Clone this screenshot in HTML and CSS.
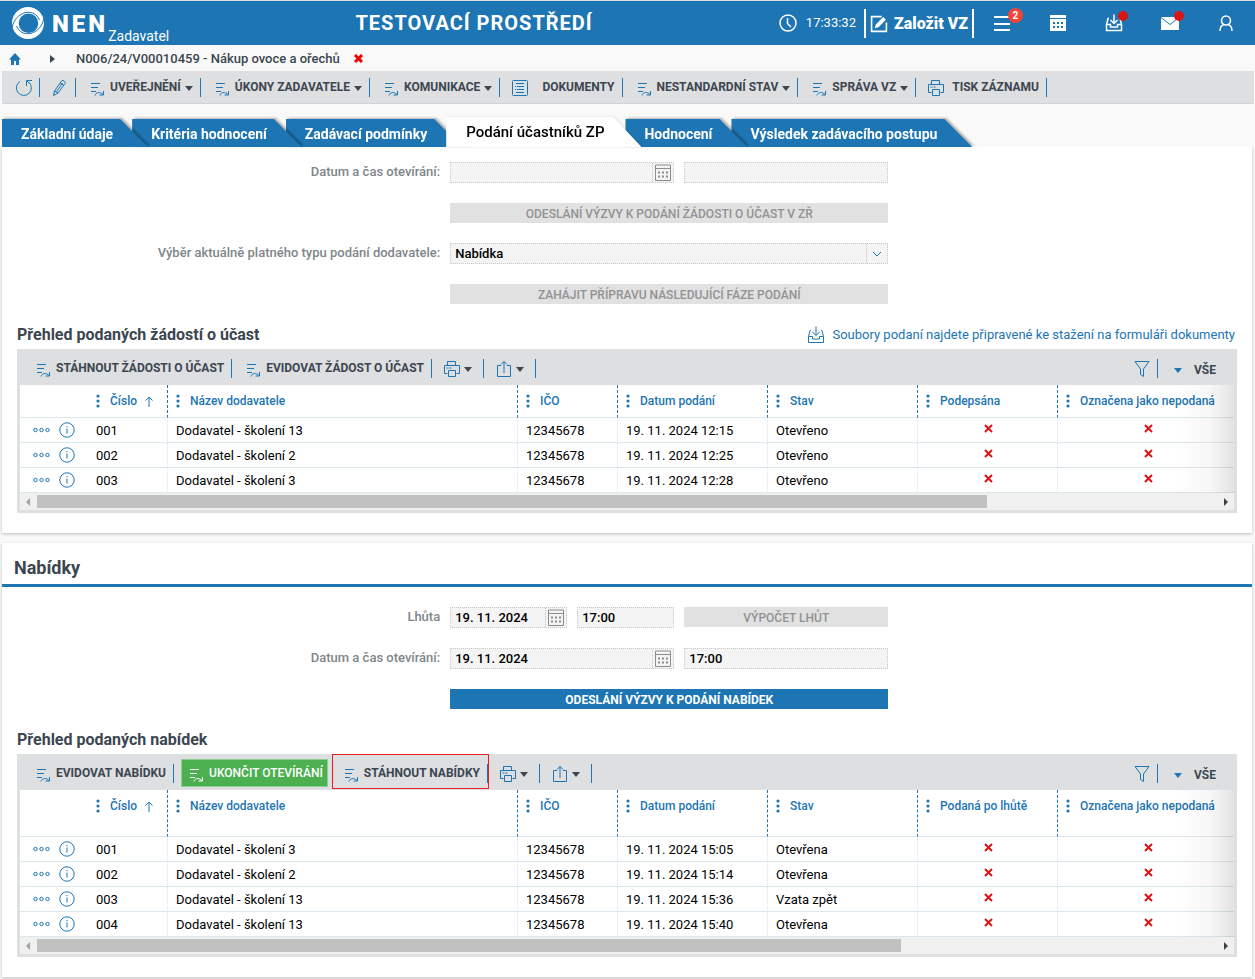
FILE: index.html
```html
<!DOCTYPE html>
<html lang="cs">
<head>
  <meta charset="UTF-8">
  <meta name="viewport" content="width=device-width, initial-scale=1.0">
  <title>NEN - Podání účastníků ZP</title>
  <link rel="stylesheet" href="styles.css">
</head>
<body>

  <!-- icons -->
  <svg class="sprite" aria-hidden="true">
    <symbol id="i-action" viewBox="0 0 14 14"><path d="M0 1.500h9M0 5.500h7M0 9.500h5M4 13.500c1-3.500 5-4 8-1M12.500 9v4h-4"/></symbol>
    <symbol id="i-refresh" viewBox="0 0 18 18"><path d="M5 2.500a7.500 7.500 0 1 0 8.500 0.500M17 1.500h-5.500v5.500M12 2l2.500 2.500"/></symbol>
    <symbol id="i-pencil" viewBox="0 0 18 18"><path d="M3.500 16.500l1-4.500L11.500 2c1-1.500 4.500 .5 3.500 2.500L8 14zM4.500 12l3.500 2M10 4l3.500 2M6.500 12.500l6-8.500"/></symbol>
    <symbol id="i-doc" viewBox="0 0 18 18"><rect x="1.500" y="1.500" width="15" height="15" rx="1"/><path d="M5 4.500h8M4 7.500h1M6 7.500h7M4 10.500h1M6 10.500h7M5 13.500h8"/></symbol>
    <symbol id="i-print" viewBox="0 0 18 18"><path d="M4.500 5V1.500h8V5M4.500 13.500h-3v-8h15v8h-3M5.500 10.500h7v6h-7zM3.500 8h2M6.500 8h2"/></symbol>
    <symbol id="i-share" viewBox="0 0 16 18"><path d="M5 5.500H1.500v11h13v-11H11M8 13V1.500M5 4.500l3-3 3 3"/></symbol>
    <symbol id="i-filter" viewBox="0 0 16 18"><path d="M1 1.500h14L9.500 9v7.500l-3-2V9z"/></symbol>
    <symbol id="i-inbox" viewBox="0 0 18 18"><path d="M4 4.500H3L1.500 10.500v6h15v-6L15 4.500h-1M1.500 10.500h4v2.500h7v-2.500h4M9 .5V9M5.500 6L9 9.500 12.500 6"/></symbol>
    <symbol id="i-info" viewBox="0 0 16 16"><circle cx="8" cy="8" r="7.200"/><path d="M8 6.500v5M8 4v1.200"/></symbol>
    <symbol id="i-more" viewBox="0 0 17 6"><circle cx="2.500" cy="3" r="1.700"/><circle cx="8.500" cy="3" r="1.700"/><circle cx="14.500" cy="3" r="1.700"/></symbol>
    <symbol id="i-cross" viewBox="0 0 9 9"><path d="M1 1l7 7M8 1l-7 7"/></symbol>
    <symbol id="i-calendar" viewBox="0 0 16 17"><path d="M.5 1h15v15.500H.5zM.5 4.500h15"/><path d="M3 8.500h10M3 12.500h10" stroke-width="2" stroke-dasharray="2 2"/></symbol>
    <symbol id="i-chevron" viewBox="0 0 10 6"><path d="M1 1l4 4 4-4"/></symbol>
    <symbol id="i-up" viewBox="0 0 8 11"><path d="M4 11V1M.5 4.500L4 1l3.500 3.500"/></symbol>
    <symbol id="i-dots" viewBox="0 0 4 14"><circle cx="2" cy="2" r="1.600"/><circle cx="2" cy="7" r="1.600"/><circle cx="2" cy="12" r="1.600"/></symbol>
  </svg>

  <header class="header">
    <a href="#" class="logo">
      <svg class="logo-mark" viewBox="0 0 32 32">
        <path fill="#fff" fill-rule="evenodd" d="M16 0a16 16 0 1 1 0 32 16 16 0 0 1 0-32zM16.500 6.500a9.800 9.800 0 1 0 0 19.600 9.800 9.800 0 0 0 0-19.600z"/>
        <path stroke="#1d75b3" stroke-width="1" d="M0 21C2 12 7 7 14 5.500 20 4.500 25 7 27.500 13M32 11c-2 9-7 14-14 15.500-6 1-11-1.500-13.500-7.500"/>
      </svg>
      <span class="logo-name">NEN</span>
      <span class="logo-role">Zadavatel</span>
    </a>
    <div class="env">TESTOVACÍ PROSTŘEDÍ</div>
    <div class="header-tools">
      <div class="clock">
        <svg viewBox="0 0 18 18"><circle cx="9" cy="9" r="8"/><path d="M8.500 4v5.500l3.500 3.500"/></svg>
        <time>17:33:32</time>
      </div>
      <button type="button" class="create">
        <svg viewBox="0 0 17 17"><path d="M11 1.500H1.500v14h14V7"/><path d="M4.500 12.500l1-3.500 7-7 2.500 2.500-7 7z" fill="#fff" stroke="none"/></svg>
        Založit VZ
      </button>
      <button type="button" class="header-btn" aria-label="Menu">
        <svg viewBox="0 0 18 18"><path d="M1 3h16M1 10h16M1 16h16" stroke-width="2"/></svg>
        <span class="badge">2</span>
      </button>
      <button type="button" class="header-btn" aria-label="Kalendář">
        <svg viewBox="0 0 18 18"><path d="M1 1h16v3H1zM1 5h16v12H1z" fill="#fff" stroke="none"/><path d="M4 9h10M4 13h10" stroke="#1d75b3" stroke-width="2" stroke-dasharray="2 2"/></svg>
      </button>
      <button type="button" class="header-btn" aria-label="Stažené soubory">
        <svg viewBox="0 0 18 18"><use href="#i-inbox"/></svg>
        <span class="dot"></span>
      </button>
      <button type="button" class="header-btn" aria-label="Zprávy">
        <svg viewBox="0 0 18 18"><path d="M0 3h18v13H0z" fill="#fff" stroke="none"/><path d="M0 3.500l9 7 9-7" stroke="#1d75b3" stroke-width="1"/></svg>
        <span class="dot"></span>
      </button>
      <button type="button" class="header-btn" aria-label="Uživatel">
        <svg viewBox="0 0 18 18"><circle cx="9" cy="6.500" r="4.500"/><path d="M3 17c0-4 2-6 4-6.500M15 17c0-4-2-6-4-6.500"/></svg>
      </button>
    </div>
  </header>

  <nav class="breadcrumb">
    <a href="#" aria-label="Domů"><svg class="home" viewBox="0 0 12 12"><path d="M6 0l6 6.500h-2V12H7V8H5v4H2V6.500H0z"/></svg></a>
    <span class="crumb-arrow"></span>
    <a href="#">N006/24/V00010459 - Nákup ovoce a ořechů</a>
    <button type="button" class="crumb-close" aria-label="Zavřít"><svg viewBox="0 0 9 9"><use href="#i-cross"/></svg></button>
  </nav>

  <div class="toolbar">
    <button type="button" class="tool tool-icon" aria-label="Obnovit"><svg viewBox="0 0 18 18"><use href="#i-refresh"/></svg></button>
    <button type="button" class="tool tool-icon" aria-label="Upravit"><svg viewBox="0 0 18 18"><use href="#i-pencil"/></svg></button>
    <button type="button" class="tool"><svg class="act" viewBox="0 0 14 14"><use href="#i-action"/></svg>UVEŘEJNĚNÍ<i class="caret"></i></button>
    <button type="button" class="tool"><svg class="act" viewBox="0 0 14 14"><use href="#i-action"/></svg>ÚKONY ZADAVATELE<i class="caret"></i></button>
    <button type="button" class="tool"><svg class="act" viewBox="0 0 14 14"><use href="#i-action"/></svg>KOMUNIKACE<i class="caret"></i></button>
    <button type="button" class="tool tool-doc"><svg viewBox="0 0 18 18"><use href="#i-doc"/></svg>DOKUMENTY</button>
    <button type="button" class="tool"><svg class="act" viewBox="0 0 14 14"><use href="#i-action"/></svg>NESTANDARDNÍ STAV<i class="caret"></i></button>
    <button type="button" class="tool"><svg class="act" viewBox="0 0 14 14"><use href="#i-action"/></svg>SPRÁVA VZ<i class="caret"></i></button>
    <button type="button" class="tool tool-print"><svg viewBox="0 0 18 18"><use href="#i-print"/></svg>TISK ZÁZNAMU</button>
  </div>

  <ul class="tabs">
    <li><a href="#">Základní údaje</a></li>
    <li><a href="#">Kritéria hodnocení</a></li>
    <li><a href="#">Zadávací podmínky</a></li>
    <li class="active"><a href="#">Podání účastníků ZP</a></li>
    <li><a href="#">Hodnocení</a></li>
    <li><a href="#">Výsledek zadávacího postupu</a></li>
  </ul>

  <main>
    <section class="card card-first">
      <div class="form">
        <label for="open-date-1">Datum a čas otevírání:</label>
        <div class="controls">
          <div class="field field-date">
            <input type="text" id="open-date-1">
            <button type="button" aria-label="Vybrat datum"><svg viewBox="0 0 16 17"><use href="#i-calendar"/></svg></button>
          </div>
          <div class="field field-time"><input type="text" aria-label="Čas otevírání"></div>
        </div>

        <button type="button" class="btn" disabled>ODESLÁNÍ VÝZVY K PODÁNÍ ŽÁDOSTI O ÚČAST V ZŘ</button>

        <label for="submission-type">Výběr aktuálně platného typu podání dodavatele:</label>
        <div class="field field-select">
          <select id="submission-type"><option>Nabídka</option></select>
          <span class="chevron"><svg viewBox="0 0 10 6"><use href="#i-chevron"/></svg></span>
        </div>

        <button type="button" class="btn" disabled>ZAHÁJIT PŘÍPRAVU NÁSLEDUJÍCÍ FÁZE PODÁNÍ</button>
      </div>

      <div class="grid-head">
        <h3>Přehled podaných žádostí o účast</h3>
        <a href="#" class="docs-link"><svg viewBox="0 0 18 18"><use href="#i-inbox"/></svg>Soubory podaní najdete připravené ke stažení na formuláři dokumenty</a>
      </div>

      <div class="grid">
        <div class="grid-tools">
          <button type="button" class="tool"><svg class="act" viewBox="0 0 14 14"><use href="#i-action"/></svg>STÁHNOUT ŽÁDOSTI O ÚČAST</button>
          <button type="button" class="tool"><svg class="act" viewBox="0 0 14 14"><use href="#i-action"/></svg>EVIDOVAT ŽÁDOST O ÚČAST</button>
          <button type="button" class="tool tool-menu" aria-label="Tisk"><svg viewBox="0 0 18 18"><use href="#i-print"/></svg><i class="caret"></i></button>
          <button type="button" class="tool tool-menu" aria-label="Export"><svg viewBox="0 0 16 18"><use href="#i-share"/></svg><i class="caret"></i></button>
          <button type="button" class="tool tool-filter" aria-label="Filtr"><svg viewBox="0 0 16 18"><use href="#i-filter"/></svg></button>
          <button type="button" class="tool-all"><i class="caret"></i>VŠE</button>
        </div>
        <div class="grid-body">
          <table>
            <colgroup><col class="c-act"><col class="c-no"><col class="c-name"><col class="c-ico"><col class="c-date"><col class="c-state"><col class="c-flag"><col class="c-last"></colgroup>
            <thead>
              <tr>
                <td></td>
                <th><svg class="dots"><use href="#i-dots"/></svg>Číslo<svg class="up"><use href="#i-up"/></svg></th>
                <th><svg class="dots"><use href="#i-dots"/></svg>Název dodavatele</th>
                <th><svg class="dots"><use href="#i-dots"/></svg>IČO</th>
                <th><svg class="dots"><use href="#i-dots"/></svg>Datum podání</th>
                <th><svg class="dots"><use href="#i-dots"/></svg>Stav</th>
                <th><svg class="dots"><use href="#i-dots"/></svg>Podepsána</th>
                <th><svg class="dots"><use href="#i-dots"/></svg>Označena jako nepodaná</th>
              </tr>
            </thead>
            <tbody>
              <tr>
                <td class="acts"><button type="button" aria-label="Akce"><svg class="more"><use href="#i-more"/></svg></button><button type="button" aria-label="Detail"><svg class="info"><use href="#i-info"/></svg></button></td>
                <td>001</td><td>Dodavatel - školení 13</td><td>12345678</td><td>19. 11. 2024 12:15</td><td>Otevřeno</td>
                <td class="flag"><svg><use href="#i-cross"/></svg></td><td class="flag"><svg><use href="#i-cross"/></svg></td>
              </tr>
              <tr>
                <td class="acts"><button type="button" aria-label="Akce"><svg class="more"><use href="#i-more"/></svg></button><button type="button" aria-label="Detail"><svg class="info"><use href="#i-info"/></svg></button></td>
                <td>002</td><td>Dodavatel - školení 2</td><td>12345678</td><td>19. 11. 2024 12:25</td><td>Otevřeno</td>
                <td class="flag"><svg><use href="#i-cross"/></svg></td><td class="flag"><svg><use href="#i-cross"/></svg></td>
              </tr>
              <tr>
                <td class="acts"><button type="button" aria-label="Akce"><svg class="more"><use href="#i-more"/></svg></button><button type="button" aria-label="Detail"><svg class="info"><use href="#i-info"/></svg></button></td>
                <td>003</td><td>Dodavatel - školení 3</td><td>12345678</td><td>19. 11. 2024 12:28</td><td>Otevřeno</td>
                <td class="flag"><svg><use href="#i-cross"/></svg></td><td class="flag"><svg><use href="#i-cross"/></svg></td>
              </tr>
            </tbody>
          </table>
        </div>
        <div class="scrollbar"><i class="arrow-left"></i><div class="track"><div class="thumb" style="width: 80.5%"></div></div><i class="arrow-right"></i></div>
      </div>
    </section>

    <section class="card">
      <h2>Nabídky</h2>
      <div class="form">
        <label for="deadline">Lhůta</label>
        <div class="controls">
          <div class="field field-date-short">
            <input type="text" id="deadline" value="19. 11. 2024">
            <button type="button" aria-label="Vybrat datum"><svg viewBox="0 0 16 17"><use href="#i-calendar"/></svg></button>
          </div>
          <div class="field field-time-short"><input type="text" aria-label="Čas lhůty" value="17:00"></div>
          <button type="button" class="btn btn-calc" disabled>VÝPOČET LHŮT</button>
        </div>

        <label for="open-date-2">Datum a čas otevírání:</label>
        <div class="controls">
          <div class="field field-date">
            <input type="text" id="open-date-2" value="19. 11. 2024">
            <button type="button" aria-label="Vybrat datum"><svg viewBox="0 0 16 17"><use href="#i-calendar"/></svg></button>
          </div>
          <div class="field field-time"><input type="text" aria-label="Čas otevírání" value="17:00"></div>
        </div>

        <button type="button" class="btn btn-primary">ODESLÁNÍ VÝZVY K PODÁNÍ NABÍDEK</button>
      </div>

      <div class="grid-head">
        <h3>Přehled podaných nabídek</h3>
      </div>

      <div class="grid">
        <div class="grid-tools">
          <button type="button" class="tool"><svg class="act" viewBox="0 0 14 14"><use href="#i-action"/></svg>EVIDOVAT NABÍDKU</button>
          <button type="button" class="tool tool-green"><svg class="act" viewBox="0 0 14 14"><use href="#i-action"/></svg>UKONČIT OTEVÍRÁNÍ</button>
          <button type="button" class="tool tool-marked"><svg class="act" viewBox="0 0 14 14"><use href="#i-action"/></svg>STÁHNOUT NABÍDKY</button>
          <button type="button" class="tool tool-menu" aria-label="Tisk"><svg viewBox="0 0 18 18"><use href="#i-print"/></svg><i class="caret"></i></button>
          <button type="button" class="tool tool-menu" aria-label="Export"><svg viewBox="0 0 16 18"><use href="#i-share"/></svg><i class="caret"></i></button>
          <button type="button" class="tool tool-filter" aria-label="Filtr"><svg viewBox="0 0 16 18"><use href="#i-filter"/></svg></button>
          <button type="button" class="tool-all"><i class="caret"></i>VŠE</button>
        </div>
        <div class="grid-body">
          <table class="tall-head">
            <colgroup><col class="c-act"><col class="c-no"><col class="c-name"><col class="c-ico"><col class="c-date"><col class="c-state"><col class="c-flag"><col class="c-last"></colgroup>
            <thead>
              <tr>
                <td></td>
                <th><svg class="dots"><use href="#i-dots"/></svg>Číslo<svg class="up"><use href="#i-up"/></svg></th>
                <th><svg class="dots"><use href="#i-dots"/></svg>Název dodavatele</th>
                <th><svg class="dots"><use href="#i-dots"/></svg>IČO</th>
                <th><svg class="dots"><use href="#i-dots"/></svg>Datum podání</th>
                <th><svg class="dots"><use href="#i-dots"/></svg>Stav</th>
                <th><svg class="dots"><use href="#i-dots"/></svg>Podaná po lhůtě</th>
                <th><svg class="dots"><use href="#i-dots"/></svg>Označena jako nepodaná</th>
              </tr>
            </thead>
            <tbody>
              <tr>
                <td class="acts"><button type="button" aria-label="Akce"><svg class="more"><use href="#i-more"/></svg></button><button type="button" aria-label="Detail"><svg class="info"><use href="#i-info"/></svg></button></td>
                <td>001</td><td>Dodavatel - školení 3</td><td>12345678</td><td>19. 11. 2024 15:05</td><td>Otevřena</td>
                <td class="flag"><svg><use href="#i-cross"/></svg></td><td class="flag"><svg><use href="#i-cross"/></svg></td>
              </tr>
              <tr>
                <td class="acts"><button type="button" aria-label="Akce"><svg class="more"><use href="#i-more"/></svg></button><button type="button" aria-label="Detail"><svg class="info"><use href="#i-info"/></svg></button></td>
                <td>002</td><td>Dodavatel - školení 2</td><td>12345678</td><td>19. 11. 2024 15:14</td><td>Otevřena</td>
                <td class="flag"><svg><use href="#i-cross"/></svg></td><td class="flag"><svg><use href="#i-cross"/></svg></td>
              </tr>
              <tr>
                <td class="acts"><button type="button" aria-label="Akce"><svg class="more"><use href="#i-more"/></svg></button><button type="button" aria-label="Detail"><svg class="info"><use href="#i-info"/></svg></button></td>
                <td>003</td><td>Dodavatel - školení 13</td><td>12345678</td><td>19. 11. 2024 15:36</td><td>Vzata zpět</td>
                <td class="flag"><svg><use href="#i-cross"/></svg></td><td class="flag"><svg><use href="#i-cross"/></svg></td>
              </tr>
              <tr>
                <td class="acts"><button type="button" aria-label="Akce"><svg class="more"><use href="#i-more"/></svg></button><button type="button" aria-label="Detail"><svg class="info"><use href="#i-info"/></svg></button></td>
                <td>004</td><td>Dodavatel - školení 13</td><td>12345678</td><td>19. 11. 2024 15:40</td><td>Otevřena</td>
                <td class="flag"><svg><use href="#i-cross"/></svg></td><td class="flag"><svg><use href="#i-cross"/></svg></td>
              </tr>
            </tbody>
          </table>
        </div>
        <div class="scrollbar"><i class="arrow-left"></i><div class="track"><div class="thumb" style="width: 73.2%"></div></div><i class="arrow-right"></i></div>
      </div>
    </section>
  </main>

</body>
</html>
```

FILE: styles.css
```css
* {
  box-sizing: border-box;
}

body {
  margin: 0;
  background: #f9f9f9;
  color: #000;
  font-family: Roboto, "Liberation Sans", sans-serif;
  font-size: 13px;
  line-height: 20px;
}

a {
  color: inherit;
  text-decoration: none;
}

button, input, select {
  font: inherit;
  color: inherit;
  margin: 0;
  padding: 0;
  border: 0;
  background: none;
}

button {
  cursor: pointer;
}

svg {
  display: block;
  flex: none;
  fill: none;
  stroke: #1d75b3;
  stroke-width: 1;
}

.sprite {
  position: absolute;
  width: 0;
  height: 0;
}

/* header */
.header {
  display: flex;
  justify-content: space-between;
  align-items: center;
  height: 45px;
  border-top: 1px solid #dedfe1;
  background: #1d75b3;
  color: #fff;
}

.header svg {
  width: 18px;
  height: 18px;
  stroke: #fff;
  stroke-width: 1.5;
}

.logo {
  display: flex;
  align-items: center;
  padding-left: 12px;
}

.header .logo-mark {
  width: 32px;
  height: 32px;
  stroke: none;
}

.logo-name {
  margin-left: 8px;
  padding-top: 2px;
  font-size: 24px;
  font-weight: 900;
  letter-spacing: 3px;
}

.logo-role {
  padding-top: 26px;
  font-size: 14px;
}

.env {
  font-size: 20px;
  font-weight: 700;
  letter-spacing: 1px;
}

.header-tools {
  display: flex;
  align-items: center;
  padding-right: 1px;
}

.clock {
  display: flex;
  align-items: center;
  gap: 9px;
  margin-right: 8px;
}

.create {
  display: flex;
  align-items: center;
  gap: 6px;
  height: 29px;
  padding: 2px 4px 0;
  border: solid #fff;
  border-width: 0 2px;
  font-size: 16px;
  font-weight: 900;
}

.header-btn {
  position: relative;
  display: flex;
  justify-content: center;
  width: 56px;
}

.badge {
  position: absolute;
  top: -6px;
  left: 34px;
  width: 15px;
  height: 15px;
  border-radius: 50%;
  background: #f44336;
  font-size: 10px;
  font-weight: 700;
  line-height: 15px;
}

.dot {
  position: absolute;
  top: -3px;
  left: 32px;
  width: 10px;
  height: 10px;
  border-radius: 50%;
  background: #d91616;
}

/* breadcrumb */
.breadcrumb {
  display: flex;
  align-items: center;
  height: 26px;
  padding: 1px 0 0 9px;
  color: #3c4650;
  font-weight: 500;
}

.home {
  width: 12px;
  height: 12px;
  fill: #1d75b3;
  stroke: none;
}

.crumb-arrow {
  margin: 0 21px 0 29px;
  border-left: 5px solid #3c4650;
  border-top: 4px solid transparent;
  border-bottom: 4px solid transparent;
}

.crumb-close {
  margin-left: 14px;
}

.crumb-close svg {
  width: 9px;
  height: 9px;
  stroke: #f00000;
  stroke-width: 3;
}

/* toolbars */
.toolbar {
  display: flex;
  align-items: flex-start;
  height: 33px;
  margin: 0 1px 0 2px;
  padding-top: 7px;
  border-bottom: 1px solid #d2d3d5;
  background: #dedfe1;
}

.tool {
  display: flex;
  align-items: center;
  height: 19px;
  padding: 0 7px 2px 15px;
  border-right: 1px solid #1d75b3;
  color: #3c4650;
  font-size: 12px;
  font-weight: 700;
  white-space: nowrap;
}

.tool svg {
  width: 18px;
  height: 18px;
  margin-top: 2px;
}

.tool .act {
  width: 14px;
  height: 14px;
  margin: 5px 5px 0 0;
}

.tool-icon {
  padding-left: 13px;
  padding-right: 6px;
}

.tool-icon + .tool-icon {
  padding-left: 10px;
  padding-right: 7px;
}

.tool-doc, .tool-print {
  padding-left: 11px;
}

.tool-doc svg {
  margin-right: 13px;
}

.tool-print svg {
  margin-right: 7px;
}

.caret {
  border-top: 5px solid #3c4650;
  border-left: 4px solid transparent;
  border-right: 4px solid transparent;
}

.tool .caret {
  margin: 4px 0 0 4px;
}

.tool:has(.caret) {
  padding-right: 7px;
}

/* tabs */
.tabs {
  display: flex;
  align-items: flex-end;
  height: 43px;
  margin: 0 2px;
  padding: 0;
  list-style: none;
}

.tabs li {
  position: relative;
  margin-right: -16px;
  filter: drop-shadow(2px -1px 1px rgba(0, 0, 0, 0.3));
}

.tabs li:nth-child(1) { z-index: 6; }
.tabs li:nth-child(2) { z-index: 5; }
.tabs li:nth-child(3) { z-index: 4; }
.tabs li:nth-child(5) { z-index: 2; }
.tabs li:nth-child(6) { z-index: 1; }

.tabs a {
  display: block;
  height: 28px;
  padding: 0 35px 0 19px;
  background: #1d75b3;
  clip-path: polygon(0 0, calc(100% - 28px) 0, 100% 100%, 0 100%);
  color: #fff;
  font-size: 14px;
  font-weight: 700;
  line-height: 31px;
}

.tabs .active {
  z-index: 7;
  filter: drop-shadow(1px 0 1px rgba(0, 0, 0, 0.12));
}

.tabs .active a {
  height: 30px;
  padding-left: 20px;
  padding-right: 37px;
  background: #fff;
  color: #000;
  font-size: 15px;
  font-weight: 500;
}

/* cards */
.card {
  margin: 0 3px 10px 2px;
  padding: 0 15px 20px;
  background: #fff;
  box-shadow: 0 1px 3px rgba(0, 0, 0, 0.25);
}

.card-first {
  padding-top: 15px;
  clip-path: inset(0 -4px -6px -4px);
}

.card h2 {
  margin: 0 -15px 20px;
  padding: 10px 12px 0;
  height: 44px;
  border-bottom: 3px solid #1d75b3;
  color: #3c4650;
  font-size: 18px;
  font-weight: 700;
  line-height: 30px;
}

.form {
  display: grid;
  grid-template-columns: 35% 35%;
  column-gap: 10px;
  row-gap: 20px;
  margin: 0 -17px 0 -15px;
}

.form label {
  color: #80868b;
  font-weight: 500;
  line-height: 19px;
  text-align: right;
}

.controls {
  display: flex;
  gap: 10px;
  min-width: 0;
}

.field {
  display: flex;
  min-width: 0;
  height: 21px;
  border: 1px dotted #c8c8c8;
  background: #f4f4f4;
  font-weight: 500;
}

.field input, .field select {
  flex: 1;
  width: 0;
  min-width: 0;
  padding: 0 4px;
  appearance: none;
}

.field button, .chevron {
  display: grid;
  place-items: center;
  width: 21px;
  padding-right: 1px;
  border-left: 1px dotted #c8c8c8;
}

.field button svg {
  width: 16px;
  height: 17px;
  stroke: #8c8c8c;
}

.chevron svg {
  width: 10px;
  height: 6px;
}

.btn {
  grid-column: 2;
  height: 20px;
  padding-top: 1px;
  background: #e1e1e1;
  color: #929292;
  font-size: 12px;
  font-weight: 500;
  line-height: 20px;
  white-space: nowrap;
  cursor: default;
}

.btn-primary {
  background: #1d75b3;
  color: #fff;
  font-weight: 700;
  cursor: pointer;
}

.field-date {
  flex: 222 0 0;
}

.field-time {
  flex: 202 0 0;
}

.field-date-short {
  flex: 115 0 0;
}

.field-time-short {
  flex: 95 0 0;
}

.btn-calc {
  flex: 204 0 0;
}

/* grid */
.grid-head {
  display: flex;
  justify-content: space-between;
  height: 45px;
  padding: 21px 2px 0 0;
}

.grid-head h3 {
  margin: 0;
  color: #3c4650;
  font-size: 16px;
  font-weight: 700;
}

.docs-link {
  display: flex;
  align-items: center;
  gap: 7px;
  height: 20px;
  color: #1d75b3;
}

.docs-link svg {
  width: 18px;
  height: 18px;
}

.grid {
  border: solid #dedfe1;
  border-width: 0 3px 3px;
}

.grid-tools {
  display: flex;
  align-items: flex-start;
  height: 36px;
  padding: 10px 18px 0 2px;
  background: #dedfe1;
}

.tool-menu, .tool-menu:has(.caret) {
  padding-left: 11px;
  padding-right: 11px;
}

.tool-menu .caret {
  margin-left: 3px;
}

.tool-filter {
  margin-left: auto;
  padding-right: 6px;
}

.tool-all {
  display: flex;
  align-items: center;
  gap: 12px;
  padding: 1px 0 0 16px;
  color: #3c4650;
  font-size: 12px;
  font-weight: 700;
}

.tool-all .caret {
  border-top-color: #1d75b3;
}

.tool-green {
  height: 28px;
  margin: -5px 2px 0 7px;
  padding: 1px 4px 2px 8px;
  border: 1px solid #8fd092;
  background: #4caf50;
  color: #fff;
  font-weight: 500;
}

.tool-green svg {
  stroke: #fff;
}

.tool-marked {
  position: relative;
}

.tool-marked::after {
  content: "";
  position: absolute;
  inset: -10px -2px -6px 2px;
  border: 1px solid #ed1c24;
}

.grid-body {
  position: relative;
  overflow: hidden;
}

.grid-body::after {
  content: "";
  position: absolute;
  top: 0;
  right: 0;
  bottom: 0;
  width: 60px;
  background: linear-gradient(to right, rgba(0, 0, 0, 0), rgba(0, 0, 0, 0.03) 60%, rgba(0, 0, 0, 0.11));
}

table {
  width: 1218px;
  border-collapse: separate;
  border-spacing: 0;
  table-layout: fixed;
  background: #fff;
}

.c-act { width: 68px; }
.c-no { width: 80px; }
.c-name { width: 350px; }
.c-ico { width: 100px; }
.c-date, .c-state { width: 150px; }
.c-flag { width: 140px; }
.c-last { width: 180px; }

th, td {
  height: 25px;
  padding: 2px 8px 0;
  border-right: 1px dotted #d5e2ea;
  border-bottom: 1px solid #dde8ee;
  text-align: left;
  white-space: nowrap;
}

th {
  height: 33px;
  padding: 6px 8px 0;
  border-right: 1px dashed #1d75b3;
  color: #1d75b3;
  font-size: 12px;
  font-weight: 500;
  vertical-align: top;
}

.tall-head th {
  height: 47px;
}

td:first-child, th:last-child, td:last-child {
  border-right: 0;
}

th svg {
  display: inline-block;
  vertical-align: middle;
}

.dots {
  width: 4px;
  height: 14px;
  margin: -2px 10px 0 0;
  fill: #1d75b3;
  stroke: none;
}

.up {
  width: 8px;
  height: 11px;
  margin-left: 8px;
}

.acts {
  padding: 0 0 1px 13px;
}

.acts button {
  display: inline-block;
  margin-right: 9px;
  vertical-align: middle;
}

.more {
  width: 17px;
  height: 6px;
}

.info {
  width: 16px;
  height: 16px;
}

.flag {
  padding: 0 8px 0 9px;
}

.flag svg {
  width: 9px;
  height: 9px;
  margin: 0 auto 3px;
  stroke: #dc1414;
  stroke-width: 2;
}

.scrollbar {
  display: flex;
  align-items: center;
  height: 17px;
  background: #f0f0f0;
}

.arrow-left, .arrow-right {
  border-top: 4px solid transparent;
  border-bottom: 4px solid transparent;
}

.arrow-left {
  margin: 0 7px 0 6px;
  border-right: 4px solid #a3a3a3;
}

.arrow-right {
  margin: 0 6px 0 7px;
  border-left: 4px solid #404040;
}

.track {
  flex: 1;
}

.thumb {
  height: 13px;
  background: #c1c1c1;
}
```
